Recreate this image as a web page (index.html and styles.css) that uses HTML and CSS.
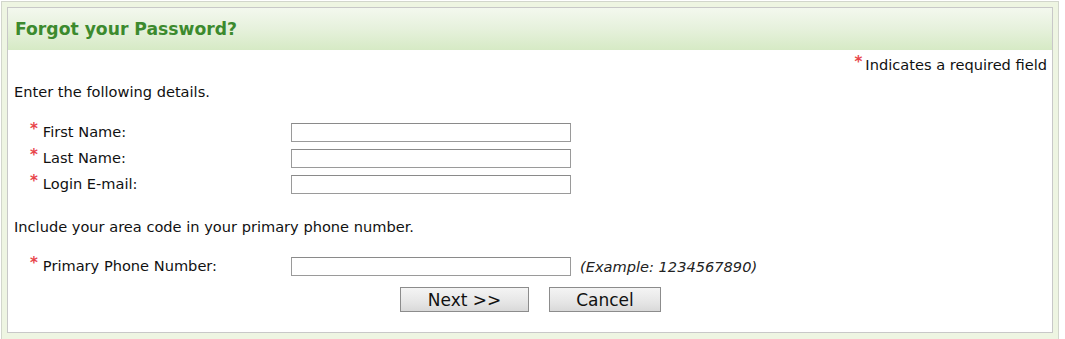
FILE: index.html
```html
<!DOCTYPE html>
<html lang="en">
<head>
    <meta charset="UTF-8">
    <meta name="viewport" content="width=device-width, initial-scale=1.0">
    <title>Forgot your Password?</title>
    <link rel="stylesheet" href="styles.css">
</head>
<body>
    <div class="frame">
        <div class="panel">
            <div class="panel-header">
                <h2>Forgot your Password?</h2>
            </div>
            <form id="forgotForm" class="panel-body">
                <div class="required-note"><span class="req">*</span>Indicates a required field</div>
                <p class="intro">Enter the following details.</p>
                <div class="form-grid">
                    <label for="firstName"><span class="req">*</span>First Name:</label>
                    <input type="text" id="firstName" name="firstName">
                    <span></span>
                    <label for="lastName"><span class="req">*</span>Last Name:</label>
                    <input type="text" id="lastName" name="lastName">
                    <span></span>
                    <label for="email"><span class="req">*</span>Login E-mail:</label>
                    <input type="email" id="email" name="email">
                    <span></span>
                </div>
                <p class="intro second">Include your area code in your primary phone number.</p>
                <div class="form-grid phone-grid">
                    <label for="phone"><span class="req">*</span>Primary Phone Number:</label>
                    <input type="text" id="phone" name="phone">
                    <span class="hint">(Example: 1234567890)</span>
                </div>
                <div class="actions">
                    <button type="submit" class="btn btn-next">Next &gt;&gt;</button>
                    <button type="button" class="btn btn-cancel">Cancel</button>
                </div>
            </form>
        </div>
    </div>
</body>
</html>
```

FILE: styles.css
```css
body {
    font-family: "DejaVu Sans", Verdana, sans-serif;
    font-size: 14.6px;
    color: #111;
    margin: 0;
    background-color: #fff;
}
.frame {
    width: 1046px;
    margin: 1px 0 0 1px;
    padding: 5px 5px 0 5px;
    background: #eef5e2;
    border: 1px solid #d2d6cc;
    border-bottom: none;
    height: 340px;
}
.panel {
    background: white;
    border: 1px solid #c8c8c8;
    height: 324px;
}
.panel-header {
    height: 42px;
    background: linear-gradient(to bottom, #f3f8ee 0%, #e6f1dc 50%, #d6eac5 100%);
    display: flex;
    align-items: center;
    padding-left: 7px;
}
h2 {
    margin: 0;
    font-size: 17.2px;
    font-weight: bold;
    color: #3c8a2e;
}
.panel-body {
    padding: 0 5px 0 6px;
}
.req {
    color: #e8454a;
    font-weight: bold;
    font-size: 15px;
    position: relative;
    top: -3px;
    margin-right: 5px;
}
.required-note {
    text-align: right;
    margin-top: 6px;
    line-height: 18px;
}
.required-note .req {
    margin-right: 3px;
}
.intro {
    margin: 9px 0 0 0;
    line-height: 18px;
}
.intro.second {
    margin-top: 24px;
}
.form-grid {
    display: grid;
    grid-template-columns: 277px 280px auto;
    row-gap: 6px;
    align-items: center;
    margin-top: 21px;
}
.form-grid label {
    padding-left: 16px;
    line-height: 19px;
}
.phone-grid {
    margin-top: 20px;
}
input {
    height: 19px;
    width: 280px;
    padding: 0 3px;
    border: 1px solid #9a9a9a;
    border-top-color: #8a8a8a;
    box-sizing: border-box;
    font-family: inherit;
}
.hint {
    font-style: italic;
    color: #222;
    padding-left: 9px;
}
.actions {
    display: flex;
    gap: 20px;
    margin: 11px 0 0 386px;
}
.btn {
    height: 25px;
    font-family: inherit;
    font-size: 17px;
    color: #111;
    background: linear-gradient(to bottom, #f4f4f4 0%, #e6e6e6 60%, #d9d9d9 100%);
    border: 1px solid #8c8c8c;
    padding: 0;
    cursor: pointer;
}
.btn-next {
    width: 129px;
}
.btn-cancel {
    width: 112px;
}
.btn:hover {
    background: #e0e0e0;
}
```
